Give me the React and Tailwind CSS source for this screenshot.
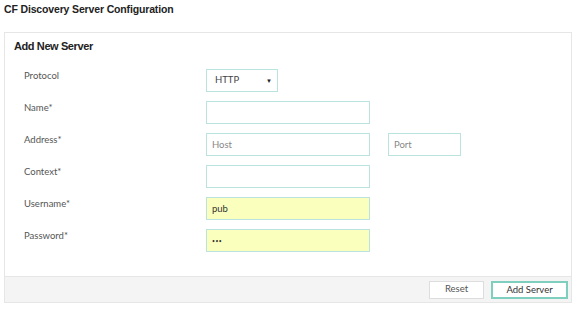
import React from 'react';

// ─── Form rows ────────────────────────────────────────────────────────────────
const FIELD = "h-[23px] border border-[#b9e3dc] px-[5px] text-[9.5px] text-[#333] placeholder:text-[#888] outline-none";

function Row({ label, children }) {
    return (
        <div className="flex items-start h-[23px]">
            <div className="w-[201px] pl-[19px] pt-[1px] text-[9.5px] leading-[12px] text-[#555]">{label}</div>
            <div className="flex items-start">{children}</div>
        </div>
    );
}

export default function App() {
    return (
        <div className="w-[576px] h-[310px] bg-white flex flex-col" style={{ fontFamily: "Lato, 'Open Sans', sans-serif" }}>
            {/* page title */}
            <div className="h-[32px] pl-[4px] pt-[2px] text-[10.5px] font-bold text-[#222] leading-[14px] tracking-[-0.15px]"
                style={{ fontFamily: "'Liberation Sans', Arial, sans-serif" }}>
                CF Discovery Server Configuration
            </div>

            {/* panel */}
            <div className="mx-[4px] h-[271px] border border-[#e6e6e6] flex flex-col">
                <div className="pl-[9px] pt-[6px] text-[11px] font-bold text-[#222] leading-[14px] tracking-[-0.4px]"
                    style={{ fontFamily: "'Liberation Sans', Arial, sans-serif" }}>
                    Add New Server
                </div>

                <div className="mt-[16px] flex flex-col gap-[9px]">
                    <Row label="Protocol">
                        <div className="w-[72px] h-[23px] border border-[#b9e3dc] flex items-center justify-between pl-[8px] pr-[5px] text-[9.5px] text-[#444]">
                            <span>HTTP</span>
                            <span className="text-[6px] text-[#222]">▼</span>
                        </div>
                    </Row>
                    <Row label="Name*">
                        <input className={`${FIELD} w-[164px]`} />
                    </Row>
                    <Row label="Address*">
                        <input className={`${FIELD} w-[164px]`} placeholder="Host" />
                        <input className={`${FIELD} w-[73px] ml-[18px]`} placeholder="Port" />
                    </Row>
                    <Row label="Context*">
                        <input className={`${FIELD} w-[164px]`} />
                    </Row>
                    <Row label="Username*">
                        <input className={`${FIELD} w-[164px] bg-[#faffbd]`} defaultValue="pub" />
                    </Row>
                    <Row label="Password*">
                        <input type="password" className={`${FIELD} w-[164px] bg-[#faffbd] text-[5px]! tracking-[0.5px]`} defaultValue="pub" />
                    </Row>
                </div>

                {/* footer */}
                <div className="mt-auto h-[26px] bg-[#f4f4f4] border-t border-[#e6e6e6] flex items-center justify-end gap-[7px] pr-[3px]">
                    <button className="w-[55px] h-[18px] bg-white border border-[#dddddd] text-[9.5px] text-[#555]">Reset</button>
                    <button className="w-[77px] h-[18px] bg-white border-2 border-[#7fcfbf] text-[9.5px] text-[#333]">Add Server</button>
                </div>
            </div>
        </div>
    );
}
